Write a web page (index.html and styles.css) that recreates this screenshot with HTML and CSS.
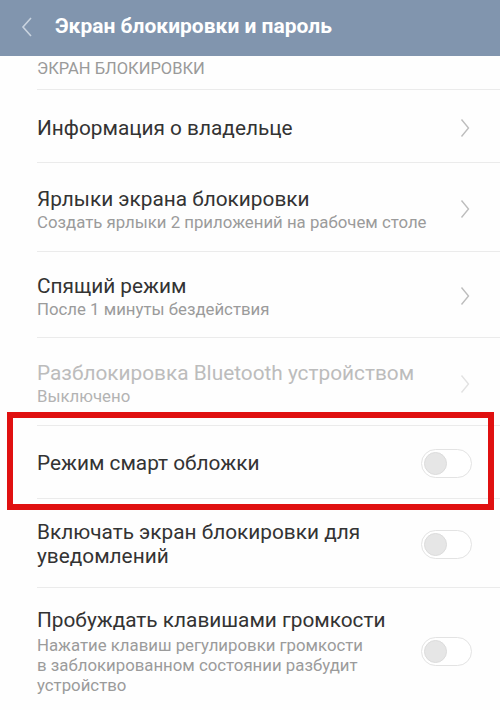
FILE: index.html
```html
<!DOCTYPE html>
<html lang="ru">
<head>
<meta charset="utf-8">
<link rel="stylesheet" href="styles.css">
</head>
<body>
<div class="screen">
  <header class="topbar">
    <svg class="back" width="14" height="22" viewBox="0 0 14 22"><path d="M11 2 L3 11 L11 20" fill="none" stroke="#c9d3df" stroke-width="1.6"/></svg>
    <h1 class="title">Экран блокировки и пароль</h1>
  </header>
  <div class="section">ЭКРАН БЛОКИРОВКИ</div>
  <ul class="list">
    <li class="row r1">
      <div class="text"><div class="main">Информация о владельце</div></div>
      <svg class="chev" width="10" height="20" viewBox="0 0 10 20"><path d="M1.5 1.5 L8.5 10 L1.5 18.5" fill="none" stroke="#bdbdbd" stroke-width="1.4"/></svg>
    </li>
    <li class="row r2">
      <div class="text"><div class="main">Ярлыки экрана блокировки</div><div class="sub">Создать ярлыки 2 приложений на рабочем столе</div></div>
      <svg class="chev" width="10" height="20" viewBox="0 0 10 20"><path d="M1.5 1.5 L8.5 10 L1.5 18.5" fill="none" stroke="#bdbdbd" stroke-width="1.4"/></svg>
    </li>
    <li class="row r3">
      <div class="text"><div class="main">Спящий режим</div><div class="sub">После 1 минуты бездействия</div></div>
      <svg class="chev" width="10" height="20" viewBox="0 0 10 20"><path d="M1.5 1.5 L8.5 10 L1.5 18.5" fill="none" stroke="#bdbdbd" stroke-width="1.4"/></svg>
    </li>
    <li class="row r4 disabled">
      <div class="text"><div class="main">Разблокировка Bluetooth устройством</div><div class="sub">Выключено</div></div>
      <svg class="chev" width="10" height="20" viewBox="0 0 10 20"><path d="M1.5 1.5 L8.5 10 L1.5 18.5" fill="none" stroke="#e2e2e2" stroke-width="1.4"/></svg>
    </li>
    <li class="row r5">
      <div class="text"><div class="main">Режим смарт обложки</div></div>
      <span class="toggle"><span class="knob"></span></span>
    </li>
    <li class="row r6">
      <div class="text"><div class="main">Включать экран блокировки для уведомлений</div></div>
      <span class="toggle"><span class="knob"></span></span>
    </li>
    <li class="row r7">
      <div class="text"><div class="main">Пробуждать клавишами громкости</div><div class="sub">Нажатие клавиш регулировки громкости в заблокированном состоянии разбудит устройство</div></div>
      <span class="toggle"><span class="knob"></span></span>
    </li>
  </ul>
  <div class="highlight"></div>
</div>
</body>
</html>
```
FILE: styles.css
```css
html, body {
  margin: 0;
  padding: 0;
  background: #fff;
}
.screen {
  position: relative;
  width: 500px;
  height: 710px;
  overflow: hidden;
  font-family: Roboto, "Noto Sans", "Liberation Sans", sans-serif;
  background: #fefefe;
}
.topbar {
  height: 56px;
  background: #8195ae;
  display: flex;
  align-items: center;
  padding-left: 20px;
  box-sizing: border-box;
}
.back {
  display: block;
  margin-top: -2px;
}
.title {
  margin: -4px 0 0 21px;
  font-size: 21px;
  font-weight: 700;
  color: #fff;
}
.section {
  height: 34px;
  margin-left: 37px;
  box-sizing: border-box;
  padding-top: 3px;
  font-size: 16.5px;
  color: #9a9a9a;
  border-bottom: 1px solid #ebebeb;
}
.list {
  list-style: none;
  margin: 0;
  padding: 0;
}
.row {
  display: flex;
  align-items: center;
  margin-left: 37px;
  padding-right: 28px;
  border-bottom: 1px solid #ebebeb;
  box-sizing: border-box;
}
.r1 { height: 73px; padding-top: 3px; }
.r2 { height: 89px; padding-top: 4px; }
.r3 { height: 86px; padding-top: 3px; }
.r4 { height: 88px; padding-top: 4px; }
.r5 { height: 73px; padding-top: 2px; }
.r6 { height: 89px; padding-top: 2px; }
.r7 { height: 130px; border-bottom: none; align-items: flex-start; padding-top: 20px; }
.text {
  flex: 1;
  min-width: 0;
}
.main {
  font-size: 20.8px;
  line-height: 24px;
  color: #333;
}
.sub {
  font-size: 16.8px;
  line-height: 20px;
  color: #9b9b9b;
  margin-top: 1px;
}
.r6 .main { max-width: 340px; }
.r7 .sub { max-width: 332px; margin-top: 3px; }
.disabled .main { color: #bcbcbc; }
.disabled .sub { color: #b3b3b3; }
.chev {
  flex: none;
  margin-right: 2px;
}
.toggle {
  flex: none;
  width: 51px;
  height: 29px;
  box-sizing: border-box;
  border: 1px solid #e3e3e3;
  border-radius: 15px;
  background: #fff;
  position: relative;
  display: block;
}
.knob {
  position: absolute;
  left: 2px;
  top: 2px;
  width: 23px;
  height: 23px;
  border-radius: 50%;
  background: #e6e6e6;
  border: 1px solid #dcdcdc;
  box-sizing: border-box;
}
.r7 .toggle { margin-top: 29px; }
.highlight {
  position: absolute;
  left: 7px;
  top: 412px;
  width: 487px;
  height: 98px;
  box-sizing: border-box;
  border: 6px solid #e01010;
  pointer-events: none;
}
```
